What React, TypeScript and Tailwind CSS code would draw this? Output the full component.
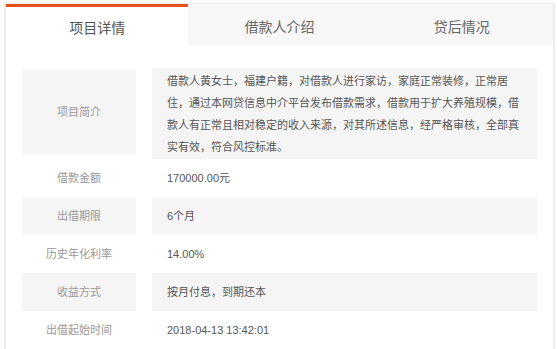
const rows = [
  { label: '借款金额', value: '170000.00元', shaded: false },
  { label: '出借期限', value: '6个月', shaded: true },
  { label: '历史年化利率', value: '14.00%', shaded: false },
  { label: '收益方式', value: '按月付息，到期还本', shaded: true },
  { label: '出借起始时间', value: '2018-04-13 13:42:01', shaded: false },
];

const tabs = ['项目详情', '借款人介绍', '贷后情况'];

const font = { fontFamily: '"Liberation Sans", "Noto Sans CJK SC", sans-serif' };

export default function App() {
  return (
    <div className="w-[557px] h-[349px] overflow-hidden bg-white pt-[3px] pl-[4px]" style={font}>
      <div className="w-[551px] h-[346px] border-x-2 border-t border-[#ececec]">
        {/* 标签页 */}
        <div className="flex h-[41px]">
          {tabs.map((t, i) => (
            <div
              key={t}
              className={`flex-1 flex items-center justify-center text-[14px] ${
                i === 0 ? 'bg-white border-t-[3px] border-[#e8501e] text-[#555] pt-[4px]' : 'bg-[#f7f7f7] text-[#666] pt-[6px]'
              }`}
            >
              {t}
            </div>
          ))}
        </div>

        {/* 详情 */}
        <div className="px-[16px] pt-[23px]">
          <div className="flex items-start gap-[16px]">
            <div className="w-[114px] h-[86px] mt-[1px] bg-[#f5f5f5] flex items-center justify-center text-[11px] text-[#999]">
              项目简介
            </div>
            <div className="flex-1 h-[91px] bg-[#f5f5f5] px-[15px] flex items-center text-[11px] leading-[22px] text-[#555]">
              <p>
                借款人黄女士，福建户籍，对借款人进行家访，家庭正常装修，正常居住，通过本网贷信息中介平台发布借款需求，借款用于扩大养殖规模，借款人有正常且相对稳定的收入来源，对其所述信息，经严格审核，全部真实有效，符合风控标准。
              </p>
            </div>
          </div>

          {rows.map((r) => (
            <div key={r.label} className="flex gap-[16px] h-[38px]">
              <div className={`w-[114px] flex items-center justify-center text-[11px] text-[#999] ${r.shaded ? 'bg-[#f5f5f5]' : ''}`}>
                {r.label}
              </div>
              <div className={`flex-1 flex items-center px-[15px] text-[11px] text-[#555] ${r.shaded ? 'bg-[#f5f5f5]' : ''}`}>
                {r.value}
              </div>
            </div>
          ))}
        </div>
      </div>
    </div>
  );
}
